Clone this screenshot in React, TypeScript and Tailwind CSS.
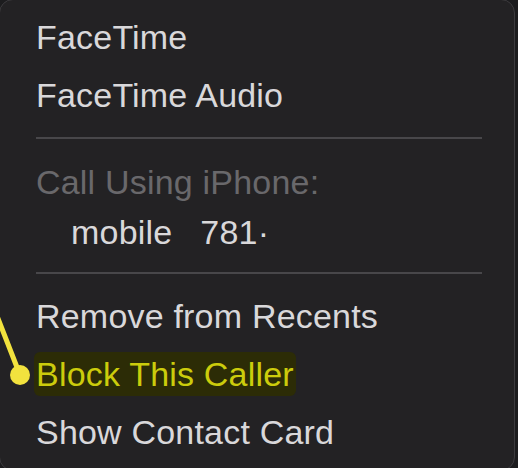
import React from "react";

const Item = ({ children, className = "" }: { children: React.ReactNode; className?: string }) => (
  <div className={`flex h-[58px] items-center text-[#d9d8da] ${className}`}>{children}</div>
);

const Divider = ({ className = "" }: { className?: string }) => (
  <div className={`h-[2px] mr-[32px] bg-[#48474a] ${className}`} />
);

export default function App() {
  return (
    <div
      className="relative h-[468px] w-[518px] overflow-hidden bg-[#1c1c1e]"
      style={{ fontFamily: '"Liberation Sans", Arial, sans-serif' }}
    >
      <div className="h-[472px] w-[516px] -ml-[1px] -mt-[1px] rounded-[14px] border border-[#3c3b3e] bg-[#232224] pl-[36px] pt-[8px] text-[34px] leading-none tracking-[0.2px]">
        <Item>FaceTime</Item>
        <Item>FaceTime Audio</Item>
        <Divider className="mt-[13px]" />
        <Item className="mt-[14px] !text-[#69686b]">Call Using iPhone:</Item>
        <div className="flex h-[42px] items-center pl-[35px] text-[#d9d8da]">
          <span>mobile</span>
          <span className="ml-[28px]">781·</span>
        </div>
        <Divider className="mt-[19px]" />
        <Item className="mt-[13px]">Remove from Recents</Item>
        <Item>
          <span className="-ml-[2px] rounded-[6px] bg-[#2c2c06] px-[2px] py-[5px] text-[#cccc0c]">Block This Caller</span>
        </Item>
        <Item>Show Contact Card</Item>
      </div>

      <svg className="absolute left-0 top-0" width="40" height="400" viewBox="0 0 40 400">
        <line x1="-3" y1="316" x2="20" y2="375" stroke="#f2e23e" strokeWidth="5" strokeLinecap="round" />
        <circle cx="20" cy="375" r="10" fill="#f2e23e" />
      </svg>
    </div>
  );
}
